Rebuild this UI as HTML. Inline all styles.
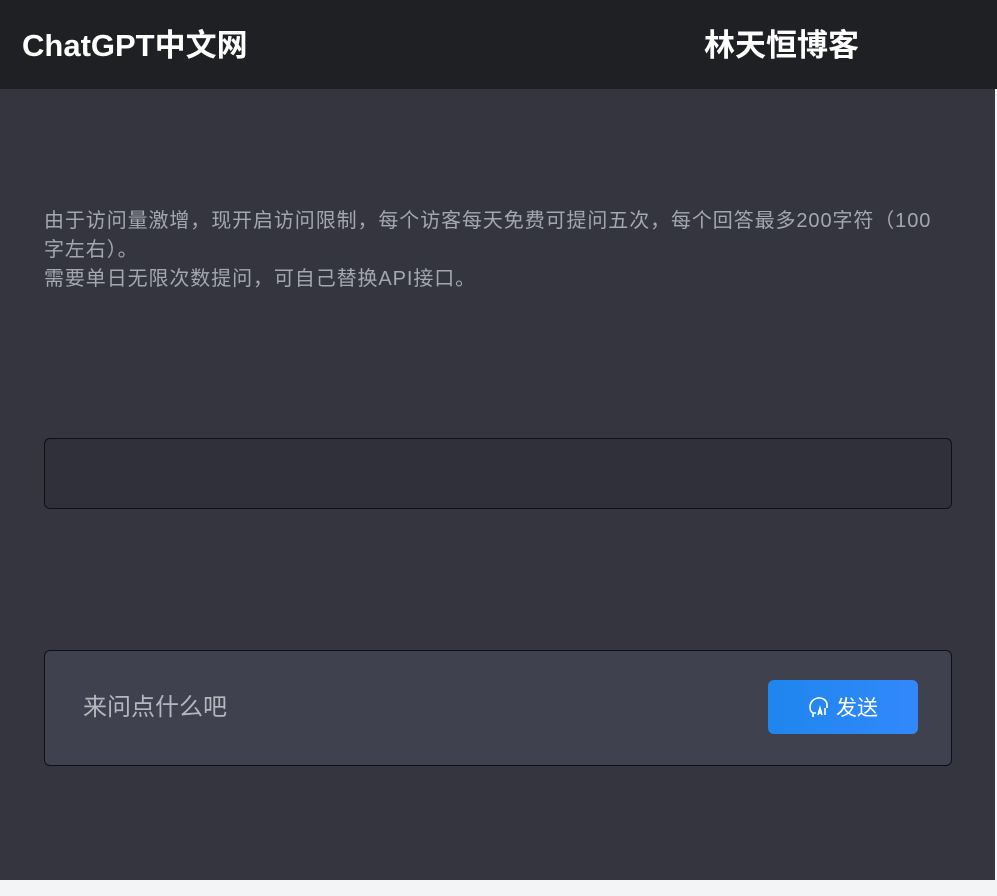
<!DOCTYPE html>
<html><head><meta charset="utf-8"><style>
*{margin:0;padding:0;box-sizing:border-box}
body{width:997px;height:896px;background:#f3f4f6;font-family:"Liberation Sans","Noto Sans CJK SC",sans-serif;overflow:hidden;position:relative}
.hdr{position:absolute;left:0;top:0;width:997px;height:89px;background:#1f2023}
.t1{position:absolute;left:22px;top:26px;color:#fff;font-weight:bold;font-size:31px;line-height:40px}
.t2{position:absolute;left:704px;top:26px;color:#fff;font-weight:bold;font-size:31px;line-height:40px}
.main{position:absolute;left:0;top:89px;width:995px;height:791px;background:#35353f}
.note{position:absolute;left:44px;top:207px;width:940px;color:#a3a7b0;font-size:20px;line-height:29px;white-space:nowrap;letter-spacing:0.9px}
.b1{position:absolute;left:44px;top:438px;width:908px;height:71px;border:1px solid #0f0f14;border-radius:6px;background:#30303a}
.b2{position:absolute;left:44px;top:650px;width:908px;height:116px;border:1px solid #0f0f14;border-radius:6px;background:#40414e}
.ph{position:absolute;left:38px;top:42px;color:#b5b7be;font-size:24px;line-height:30px}
.btn{position:absolute;left:723px;top:29px;width:150px;height:54px;border-radius:6px;background:linear-gradient(90deg,#1e86ee,#3288fb);color:#fff;font-size:21px;display:flex;align-items:center;justify-content:center;gap:6px}
</style></head><body>
<div class="hdr"><div class="t1">ChatGPT中文网</div><div class="t2">林天恒博客</div></div>
<div class="main"></div>
<div class="note">由于访问量激增，现开启访问限制，每个访客每天免费可提问五次，每个回答最多200字符（100<br>字左右）。<br>需要单日无限次数提问，可自己替换API接口。</div>
<div class="b1"></div>
<div class="b2"><div class="ph">来问点什么吧</div>
<div class="btn"><svg width="22" height="24" viewBox="0 0 22 24" fill="none" stroke="#fff" stroke-width="1.6"><path d="M5 22v-4c-2-1-3-3-3-6 0-5 4-9 9-9s8 3 8 7v3M5 18h3"/><path d="M10 20l2-7 2 7M10.8 18h2.4M17 13v7"/></svg>发送</div></div>
</body></html>
